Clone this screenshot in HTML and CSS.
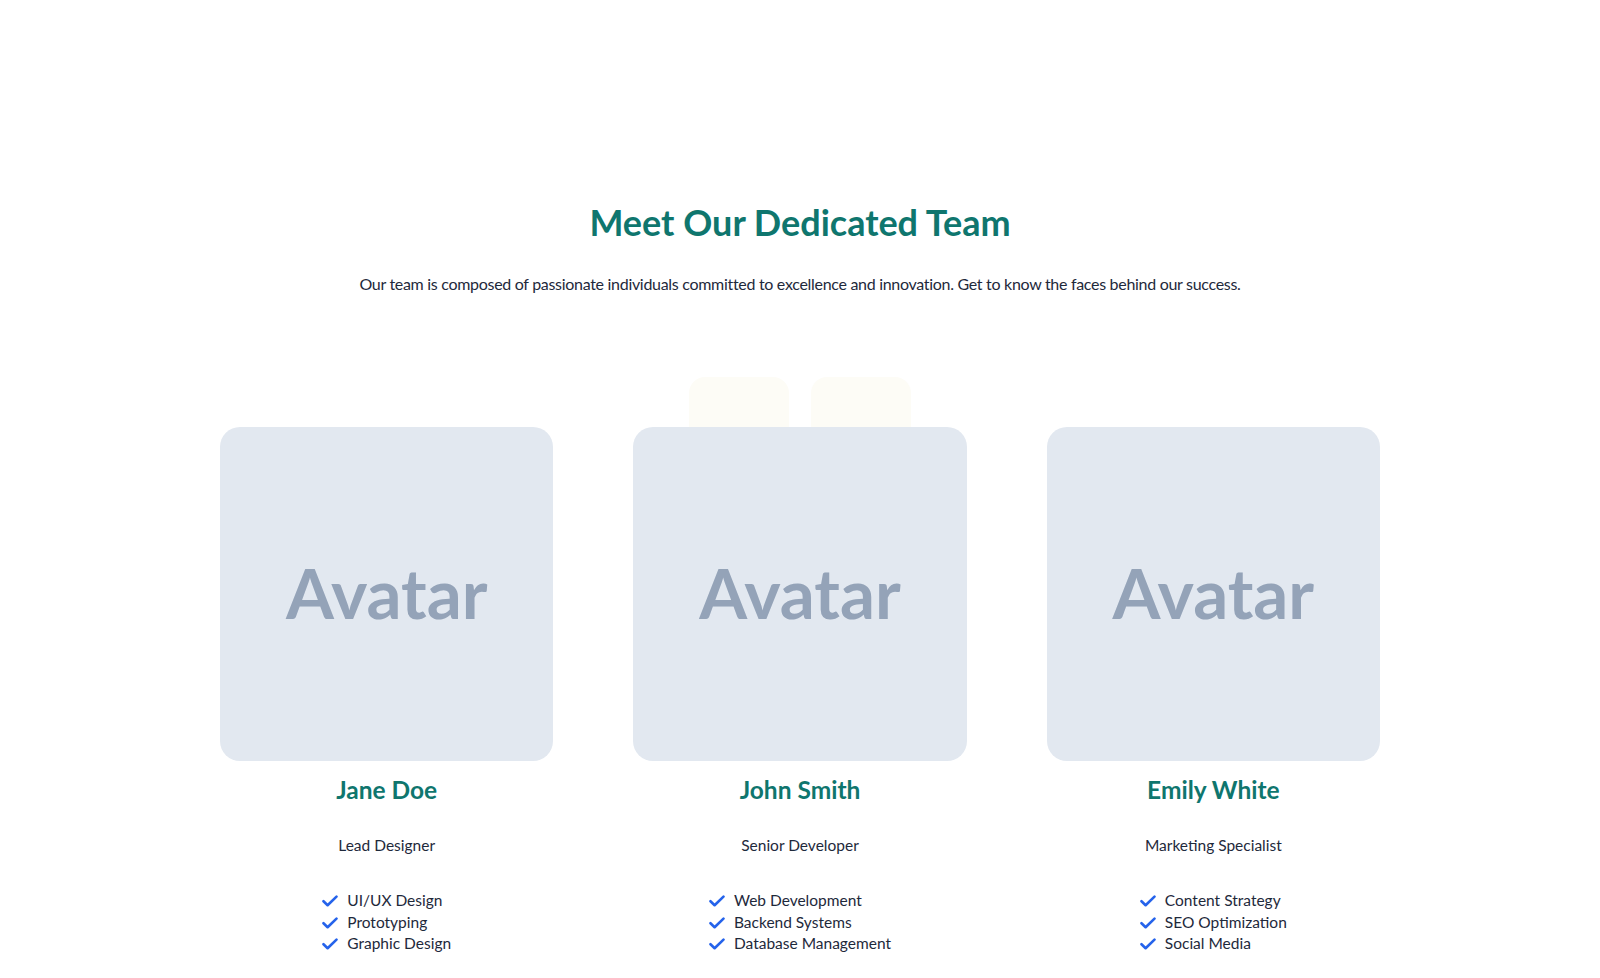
FILE: index.html
```html
<!DOCTYPE html>
<html lang="en">
<head>
<meta charset="utf-8">
<title>Our Team</title>
<link rel="stylesheet" href="styles.css">
</head>
<body>
<section class="team">
  <header class="team-head">
    <h1 class="team-title">Meet Our Dedicated Team</h1>
    <p class="team-lead">Our team is composed of passionate individuals committed to excellence and innovation. Get to know the faces behind our success.</p>
  </header>

  <div class="team-grid">
    <span class="deco deco-left"></span>
    <span class="deco deco-right"></span>

    <article class="member">
      <div class="avatar">Avatar</div>
      <h2 class="member-name">Jane Doe</h2>
      <p class="member-role">Lead Designer</p>
      <ul class="skills">
        <li><svg class="check" viewBox="0 0 16 12"><path d="M1.5 6.2 5.6 10.2 14.5 1.6"/></svg>UI/UX Design</li>
        <li><svg class="check" viewBox="0 0 16 12"><path d="M1.5 6.2 5.6 10.2 14.5 1.6"/></svg>Prototyping</li>
        <li><svg class="check" viewBox="0 0 16 12"><path d="M1.5 6.2 5.6 10.2 14.5 1.6"/></svg>Graphic Design</li>
      </ul>
    </article>

    <article class="member">
      <div class="avatar">Avatar</div>
      <h2 class="member-name">John Smith</h2>
      <p class="member-role">Senior Developer</p>
      <ul class="skills">
        <li><svg class="check" viewBox="0 0 16 12"><path d="M1.5 6.2 5.6 10.2 14.5 1.6"/></svg>Web Development</li>
        <li><svg class="check" viewBox="0 0 16 12"><path d="M1.5 6.2 5.6 10.2 14.5 1.6"/></svg>Backend Systems</li>
        <li><svg class="check" viewBox="0 0 16 12"><path d="M1.5 6.2 5.6 10.2 14.5 1.6"/></svg>Database Management</li>
      </ul>
    </article>

    <article class="member">
      <div class="avatar">Avatar</div>
      <h2 class="member-name">Emily White</h2>
      <p class="member-role">Marketing Specialist</p>
      <ul class="skills">
        <li><svg class="check" viewBox="0 0 16 12"><path d="M1.5 6.2 5.6 10.2 14.5 1.6"/></svg>Content Strategy</li>
        <li><svg class="check" viewBox="0 0 16 12"><path d="M1.5 6.2 5.6 10.2 14.5 1.6"/></svg>SEO Optimization</li>
        <li><svg class="check" viewBox="0 0 16 12"><path d="M1.5 6.2 5.6 10.2 14.5 1.6"/></svg>Social Media</li>
      </ul>
    </article>
  </div>
</section>
</body>
</html>
```

FILE: styles.css
```css
* { box-sizing: border-box; }

html, body {
  margin: 0;
  background: #ffffff;
}

body {
  font-family: Lato, "Noto Sans", sans-serif;
  color: #1e293b;
}

.team {
  padding-top: 201px;
  padding-bottom: 40px;
}

.team-head {
  text-align: center;
}

.team-title {
  margin: 0;
  font-size: 36px;
  line-height: 1.2;
  font-weight: 700;
  color: #0f766e;
}

.team-lead {
  margin: 28px 0 0;
  font-size: 16px;
  line-height: 1.5;
  letter-spacing: -0.3px;
}

.team-grid {
  position: relative;
  width: 1160px;
  margin: 131px auto 0;
  display: grid;
  grid-template-columns: repeat(3, 1fr);
  gap: 80px;
}

/* faint rounded tiles peeking out above the middle card */
.deco {
  position: absolute;
  top: -50px;
  width: 100px;
  height: 100px;
  border-radius: 16px;
  background: #fdfcf6;
  z-index: 0;
}
.deco-left { left: 469px; }
.deco-right { left: 591px; }

.member {
  position: relative;
  z-index: 1;
  text-align: center;
}

.avatar {
  width: 100%;
  aspect-ratio: 1 / 1;
  border-radius: 20px;
  background: #e2e8f0;
  color: #94a3b8;
  font-size: 69px;
  font-weight: 700;
  display: flex;
  align-items: center;
  justify-content: center;
  padding-bottom: 3px;
}

.member-name {
  margin: 14px 0 0;
  font-size: 24.5px;
  line-height: 1.2;
  font-weight: 700;
  color: #0f766e;
}

.member-role {
  margin: 30px 0 0;
  font-size: 15.5px;
  line-height: 1.5;
}

.skills {
  display: inline-flex;
  flex-direction: column;
  align-items: flex-start;
  margin: 33px 0 0;
  padding: 0;
  list-style: none;
  font-size: 15.5px;
  line-height: 21.6px;
}

.skills li {
  display: flex;
  align-items: center;
  gap: 9px;
}

.check {
  width: 16px;
  height: 12px;
  fill: none;
  stroke: #2563eb;
  stroke-width: 2.6;
  stroke-linecap: round;
  stroke-linejoin: round;
}
```
